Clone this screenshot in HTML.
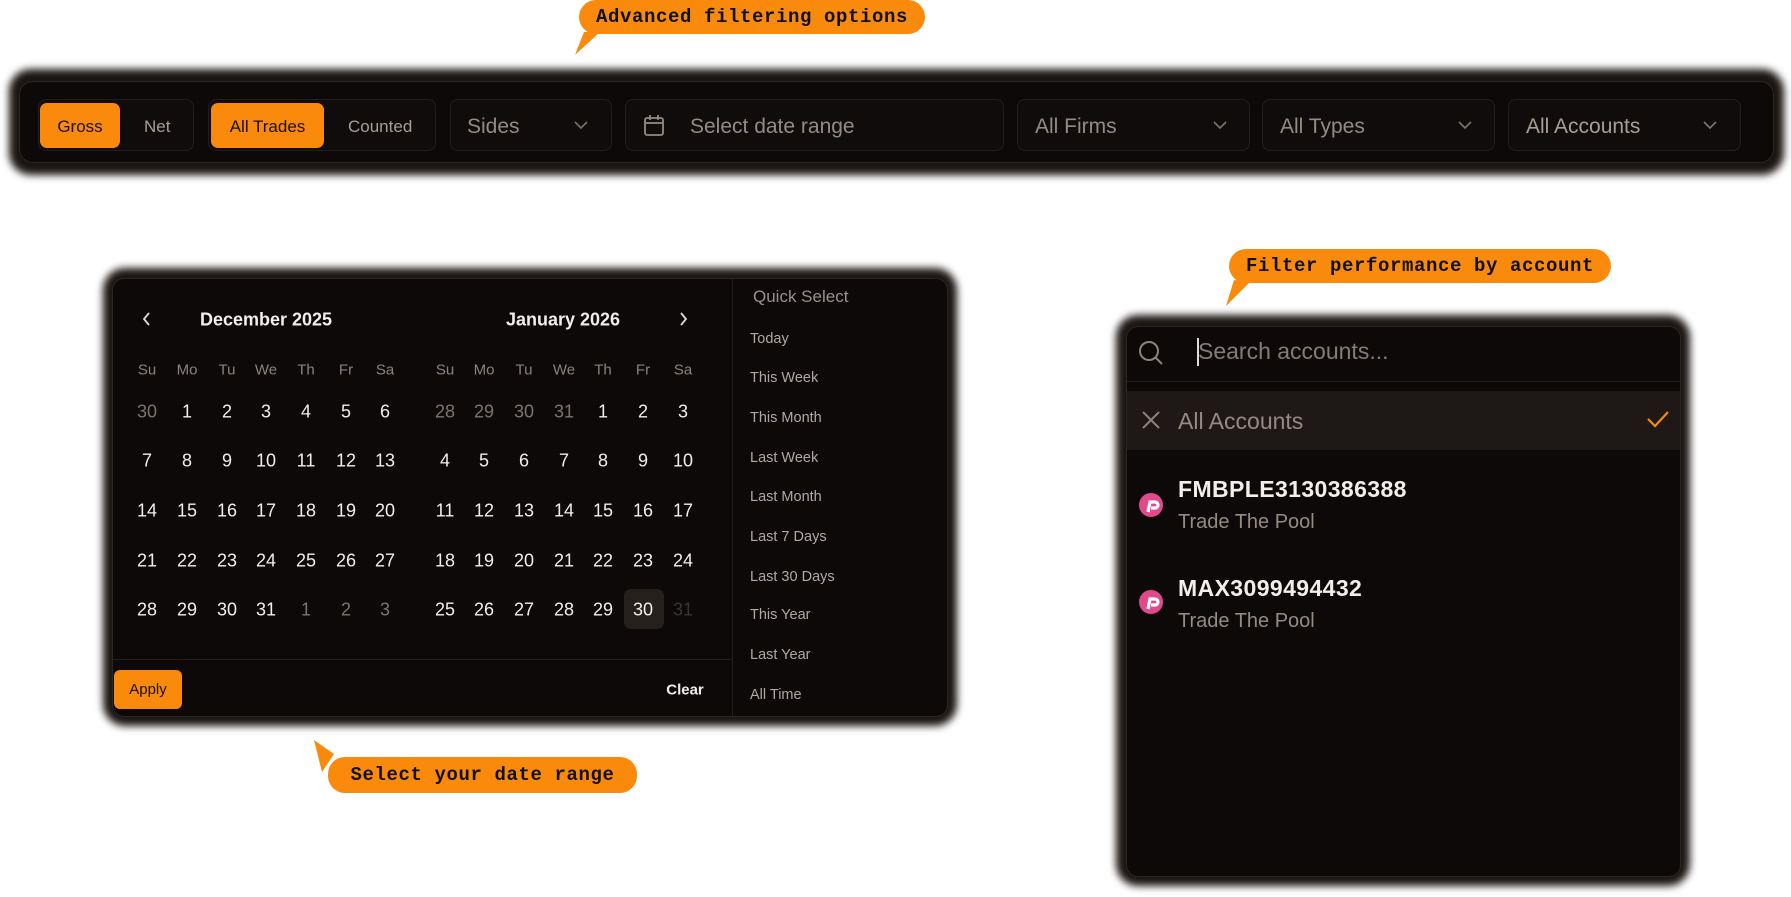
<!DOCTYPE html>
<html><head><meta charset="utf-8"><style>
*{margin:0;padding:0;box-sizing:border-box}
body{width:1791px;height:897px;background:#fff;position:relative;overflow:hidden;font-family:"Liberation Sans",sans-serif}
.a{position:absolute}
.shadow{position:absolute;background:#1a1512;filter:blur(4px)}
.panel{position:absolute;background:#0c0908;border:1px solid #2c2622}
.grp{position:absolute;border:1px solid #231e1b;border-radius:8px;background:#0f0c0b}
.pill{position:absolute;background:#f98a0c;border-radius:7px;color:#1a0e02;font-size:17px;font-weight:500;display:flex;align-items:center;justify-content:center}
.lbl{position:absolute;color:#a89e96;font-size:17px}
.dd{color:#958b83;font-size:21px;position:absolute}
.call{position:absolute;background:#f98a0c;border-radius:17px;font-family:"Liberation Mono",monospace;font-weight:bold;color:#111;font-size:19px;letter-spacing:0.6px;display:flex;align-items:center;justify-content:center}
.d{position:absolute;color:#f2eeeb;font-size:18px;width:40px;text-align:center;transform:translate(-50%,-50%)}
.g{color:#7c746e}
.wk{position:absolute;color:#8b837c;font-size:15px;width:40px;text-align:center;transform:translate(-50%,-50%)}
.qs{position:absolute;left:750px;color:#b0a9a3;font-size:14.5px;transform:translateY(-50%)}
</style></head><body>

<div class="call" style="left:579px;top:0;width:346px;height:34px">Advanced filtering options</div>
<svg class="a" style="left:570px;top:28px" width="40" height="32"><polygon points="5,27 14,4 30,4" fill="#f98a0c"/></svg>

<div class="shadow" style="left:9px;top:69px;width:1775px;height:106px;border-radius:22px"></div>
<div class="panel" style="left:19px;top:81px;width:1755px;height:82px;border-radius:14px"></div>
<div class="grp" style="left:38px;top:99px;width:156px;height:52px"></div>
<div class="pill" style="left:40px;top:103px;width:80px;height:45px;padding-top:2px">Gross</div>
<div class="lbl" style="left:144px;top:117px">Net</div>
<div class="grp" style="left:208px;top:99px;width:228px;height:52px"></div>
<div class="pill" style="left:211px;top:103px;width:113px;height:45px;padding-top:2px">All Trades</div>
<div class="lbl" style="left:348px;top:117px">Counted</div>
<div class="grp" style="left:450px;top:99px;width:162px;height:52px"></div>
<div class="dd" style="left:467px;top:115px">Sides</div>
<div class="grp" style="left:625px;top:99px;width:379px;height:52px"></div>
<svg class="a" style="left:643px;top:114px" width="22" height="24" viewBox="0 0 22 24" fill="none" stroke="#958b83" stroke-width="1.8"><rect x="2" y="4" width="18" height="17" rx="2"/><path d="M2 9h18M7 1v5M15 1v5"/></svg>
<div class="dd" style="left:690px;top:115px">Select date range</div>
<div class="grp" style="left:1017px;top:99px;width:233px;height:52px"></div>
<div class="dd" style="left:1035px;top:115px">All Firms</div>
<div class="grp" style="left:1262px;top:99px;width:233px;height:52px"></div>
<div class="dd" style="left:1280px;top:115px">All Types</div>
<div class="grp" style="left:1508px;top:99px;width:233px;height:52px"></div>
<div class="dd" style="left:1526px;top:115px;color:#a89e96">All Accounts</div>
<svg class="a" style="left:573px;top:119px" width="16" height="12"><path d="M2 3l6 6 6-6" fill="none" stroke="#7c746e" stroke-width="1.6"/></svg>
<svg class="a" style="left:1212px;top:119px" width="16" height="12"><path d="M2 3l6 6 6-6" fill="none" stroke="#7c746e" stroke-width="1.6"/></svg>
<svg class="a" style="left:1457px;top:119px" width="16" height="12"><path d="M2 3l6 6 6-6" fill="none" stroke="#7c746e" stroke-width="1.6"/></svg>
<svg class="a" style="left:1702px;top:119px" width="16" height="12"><path d="M2 3l6 6 6-6" fill="none" stroke="#7c746e" stroke-width="1.6"/></svg>

<div class="shadow" style="left:103px;top:268px;width:854px;height:458px;border-radius:22px"></div>
<div class="panel" style="left:112px;top:278px;width:836px;height:439px;border-radius:12px"></div>
<div class="a" style="left:732px;top:279px;width:1px;height:437px;background:#231e1b"></div>
<div class="a" style="left:113px;top:659px;width:619px;height:1px;background:#231e1b"></div>
<svg class="a" style="left:140px;top:310px" width="14" height="18"><path d="M9 3l-5 6 5 6" fill="none" stroke="#ddd" stroke-width="1.8"/></svg>
<svg class="a" style="left:676px;top:310px" width="14" height="18"><path d="M5 3l5 6-5 6" fill="none" stroke="#ddd" stroke-width="1.8"/></svg>
<div class="a" style="left:266px;top:320px;transform:translate(-50%,-50%);color:#f2eeeb;font-size:18px;font-weight:bold;white-space:nowrap">December 2025</div>
<div class="a" style="left:563px;top:320px;transform:translate(-50%,-50%);color:#f2eeeb;font-size:18px;font-weight:bold;white-space:nowrap">January 2026</div>
<div class="a" style="left:624px;top:589px;width:40px;height:40px;background:#25201c;border-radius:7px"></div>
<div class="a" style="left:114px;top:670px;width:68px;height:39px;background:#f98a0c;border-radius:6px;color:#1a0e02;font-size:15px;font-weight:500;display:flex;align-items:center;justify-content:center">Apply</div>
<div class="a" style="left:685px;top:690px;transform:translate(-50%,-50%);color:#f2eeeb;font-size:15px;font-weight:bold">Clear</div>
<div class="a" style="left:753px;top:297px;transform:translateY(-50%);color:#9a928b;font-size:17px;font-weight:500">Quick Select</div>
<div class="qs" style="top:339px">Today</div>
<div class="qs" style="top:378px">This Week</div>
<div class="qs" style="top:418px">This Month</div>
<div class="qs" style="top:458px">Last Week</div>
<div class="qs" style="top:497px">Last Month</div>
<div class="qs" style="top:537px">Last 7 Days</div>
<div class="qs" style="top:577px">Last 30 Days</div>
<div class="qs" style="top:615px">This Year</div>
<div class="qs" style="top:655px">Last Year</div>
<div class="qs" style="top:695px">All Time</div>

<svg class="a" style="left:308px;top:736px" width="40" height="40"><polygon points="6,4 26,18 14,36" fill="#f98a0c"/></svg>
<div class="call" style="left:328px;top:757px;width:309px;height:36px">Select your date range</div>

<div class="call" style="left:1229px;top:249px;width:382px;height:34px">Filter performance by account</div>
<svg class="a" style="left:1222px;top:276px" width="40" height="34"><polygon points="4,30 12,4 28,6" fill="#f98a0c"/></svg>

<div class="shadow" style="left:1116px;top:315px;width:574px;height:571px;border-radius:22px"></div>
<div class="panel" style="left:1126px;top:326px;width:555px;height:551px;border-radius:12px"></div>
<svg class="a" style="left:1137px;top:339px" width="28" height="28" viewBox="0 0 28 28" fill="none" stroke="#8b837c" stroke-width="2"><circle cx="12" cy="12" r="9"/><path d="M19 19l6 6"/></svg>
<div class="a" style="left:1197px;top:338px;width:2px;height:28px;background:#ddd"></div>
<div class="a" style="left:1198px;top:338px;color:#857c75;font-size:23px">Search accounts...</div>
<div class="a" style="left:1127px;top:381px;width:553px;height:1px;background:#231e1b"></div>
<div class="a" style="left:1127px;top:391px;width:553px;height:59px;background:#1e1916"></div>
<svg class="a" style="left:1140px;top:409px" width="22" height="22"><path d="M3 3l16 16M19 3L3 19" stroke="#8b837c" stroke-width="2"/></svg>
<div class="a" style="left:1178px;top:408px;color:#958b83;font-size:23px">All Accounts</div>
<svg class="a" style="left:1645px;top:408px" width="26" height="22"><path d="M3 11l7 7 13-14" fill="none" stroke="#f98a0c" stroke-width="2.2"/></svg>
<svg class="a" style="left:1138px;top:492px" width="26" height="26"><circle cx="13" cy="13" r="12" fill="#e0498a"/><path d="M10 20l2-10h5a3 3 0 010 6h-4" fill="none" stroke="#fff" stroke-width="3.2"/></svg>
<div class="a" style="left:1178px;top:476px;color:#f2eeeb;font-size:23px;font-weight:bold;letter-spacing:0.4px">FMBPLE3130386388</div>
<div class="a" style="left:1178px;top:511px;color:#958b83;font-size:20px">Trade The Pool</div>
<svg class="a" style="left:1138px;top:589px" width="26" height="26"><circle cx="13" cy="13" r="12" fill="#e0498a"/><path d="M10 20l2-10h5a3 3 0 010 6h-4" fill="none" stroke="#fff" stroke-width="3.2"/></svg>
<div class="a" style="left:1178px;top:575px;color:#f2eeeb;font-size:23px;font-weight:bold;letter-spacing:0.4px">MAX3099494432</div>
<div class="a" style="left:1178px;top:610px;color:#958b83;font-size:20px">Trade The Pool</div>

<div>
<div class="wk" style="left:147px;top:370px">Su</div><div class="wk" style="left:187px;top:370px">Mo</div><div class="wk" style="left:227px;top:370px">Tu</div><div class="wk" style="left:266px;top:370px">We</div><div class="wk" style="left:306px;top:370px">Th</div><div class="wk" style="left:346px;top:370px">Fr</div><div class="wk" style="left:385px;top:370px">Sa</div>
<div class="wk" style="left:445px;top:370px">Su</div><div class="wk" style="left:484px;top:370px">Mo</div><div class="wk" style="left:524px;top:370px">Tu</div><div class="wk" style="left:564px;top:370px">We</div><div class="wk" style="left:603px;top:370px">Th</div><div class="wk" style="left:643px;top:370px">Fr</div><div class="wk" style="left:683px;top:370px">Sa</div>

<div class="d g" style="left:147px;top:412px">30</div><div class="d" style="left:187px;top:412px">1</div><div class="d" style="left:227px;top:412px">2</div><div class="d" style="left:266px;top:412px">3</div><div class="d" style="left:306px;top:412px">4</div><div class="d" style="left:346px;top:412px">5</div><div class="d" style="left:385px;top:412px">6</div>
<div class="d" style="left:147px;top:461px">7</div><div class="d" style="left:187px;top:461px">8</div><div class="d" style="left:227px;top:461px">9</div><div class="d" style="left:266px;top:461px">10</div><div class="d" style="left:306px;top:461px">11</div><div class="d" style="left:346px;top:461px">12</div><div class="d" style="left:385px;top:461px">13</div>
<div class="d" style="left:147px;top:511px">14</div><div class="d" style="left:187px;top:511px">15</div><div class="d" style="left:227px;top:511px">16</div><div class="d" style="left:266px;top:511px">17</div><div class="d" style="left:306px;top:511px">18</div><div class="d" style="left:346px;top:511px">19</div><div class="d" style="left:385px;top:511px">20</div>
<div class="d" style="left:147px;top:561px">21</div><div class="d" style="left:187px;top:561px">22</div><div class="d" style="left:227px;top:561px">23</div><div class="d" style="left:266px;top:561px">24</div><div class="d" style="left:306px;top:561px">25</div><div class="d" style="left:346px;top:561px">26</div><div class="d" style="left:385px;top:561px">27</div>
<div class="d" style="left:147px;top:610px">28</div><div class="d" style="left:187px;top:610px">29</div><div class="d" style="left:227px;top:610px">30</div><div class="d" style="left:266px;top:610px">31</div><div class="d g" style="left:306px;top:610px">1</div><div class="d g" style="left:346px;top:610px">2</div><div class="d g" style="left:385px;top:610px">3</div>

<div class="d g" style="left:445px;top:412px">28</div><div class="d g" style="left:484px;top:412px">29</div><div class="d g" style="left:524px;top:412px">30</div><div class="d g" style="left:564px;top:412px">31</div><div class="d" style="left:603px;top:412px">1</div><div class="d" style="left:643px;top:412px">2</div><div class="d" style="left:683px;top:412px">3</div>
<div class="d" style="left:445px;top:461px">4</div><div class="d" style="left:484px;top:461px">5</div><div class="d" style="left:524px;top:461px">6</div><div class="d" style="left:564px;top:461px">7</div><div class="d" style="left:603px;top:461px">8</div><div class="d" style="left:643px;top:461px">9</div><div class="d" style="left:683px;top:461px">10</div>
<div class="d" style="left:445px;top:511px">11</div><div class="d" style="left:484px;top:511px">12</div><div class="d" style="left:524px;top:511px">13</div><div class="d" style="left:564px;top:511px">14</div><div class="d" style="left:603px;top:511px">15</div><div class="d" style="left:643px;top:511px">16</div><div class="d" style="left:683px;top:511px">17</div>
<div class="d" style="left:445px;top:561px">18</div><div class="d" style="left:484px;top:561px">19</div><div class="d" style="left:524px;top:561px">20</div><div class="d" style="left:564px;top:561px">21</div><div class="d" style="left:603px;top:561px">22</div><div class="d" style="left:643px;top:561px">23</div><div class="d" style="left:683px;top:561px">24</div>
<div class="d" style="left:445px;top:610px">25</div><div class="d" style="left:484px;top:610px">26</div><div class="d" style="left:524px;top:610px">27</div><div class="d" style="left:564px;top:610px">28</div><div class="d" style="left:603px;top:610px">29</div><div class="d" style="left:643px;top:610px">30</div><div class="d" style="left:683px;top:610px;color:#3a3430">31</div>
</div>
</body></html>
